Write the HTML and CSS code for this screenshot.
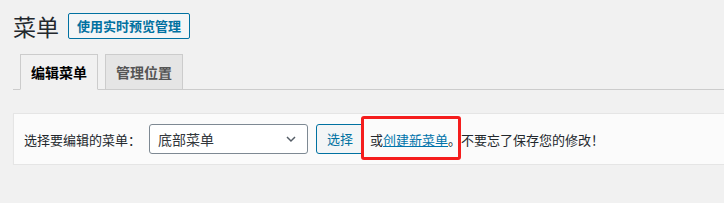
FILE: index.html
```html
<!DOCTYPE html>
<html lang="zh-CN">
<head>
<meta charset="utf-8">
<title>菜单</title>
<link rel="stylesheet" href="styles.css">
</head>
<body>
<div class="wrap">
  <div class="heading">
    <h1 class="title">菜单</h1>
    <a class="title-action" href="#">使用实时预览管理</a>
  </div>
  <nav class="tabs">
    <a class="tab tab-active" href="#">编辑菜单</a>
    <a class="tab" href="#">管理位置</a>
  </nav>
  <div class="manage">
    <span class="label">选择要编辑的菜单：</span>
    <div class="select">
      <span>底部菜单</span>
      <svg class="chev" width="16" height="16" viewBox="0 0 20 20"><path d="M5 7.5l5 5 5-5" fill="none" stroke="#555d66" stroke-width="1.8"/></svg>
    </div>
    <button class="btn">选择</button>
    <span class="note"><span class="hl">或<a href="#">创建新菜单</a>。</span>不要忘了保存您的修改！</span>
  </div>
</div>
</body>
</html>
```
FILE: styles.css
```css
html, body {
  margin: 0;
  padding: 0;
  background: #f1f1f1;
  overflow: hidden;
}
body {
  font-family: "Noto Sans CJK SC", "Noto Sans", sans-serif;
  color: #23282d;
  font-size: 13px;
}
.wrap {
  padding: 0 0 0 13px;
}
.heading {
  display: flex;
  align-items: center;
  padding-top: 13px;
  height: 26px;
}
.title {
  margin: 0;
  font-size: 23px;
  font-weight: 400;
  line-height: 26px;
  color: #23282d;
}
.title-action {
  margin-left: 9px;
  box-sizing: border-box;
  height: 26px;
  padding: 0 8px;
  border: 1px solid #0071a1;
  border-radius: 2px;
  color: #0071a1;
  background: #f3f5f6;
  font-size: 13px;
  font-weight: 700;
  line-height: 24px;
  text-decoration: none;
}
.tabs {
  display: flex;
  margin-top: 15px;
  border-bottom: 1px solid #ccc;
  margin-right: -20px;
}
.tab {
  display: block;
  margin-left: 7px;
  margin-bottom: -1px;
  padding: 5px 10px;
  border: 1px solid #ccc;
  background: #e5e5e5;
  color: #555;
  font-size: 14px;
  font-weight: 700;
  line-height: 24px;
  text-decoration: none;
}
.tab-active {
  background: #f1f1f1;
  border-bottom-color: #f1f1f1;
  color: #000;
}
.manage {
  display: flex;
  align-items: center;
  margin-top: 23px;
  margin-right: -20px;
  padding: 10px;
  background: #fbfbfb;
  border: 1px solid #e5e5e5;
  box-shadow: 0 1px 1px rgba(0,0,0,.04);
  height: 30px;
}
.label {
  line-height: 19px;
}
.select {
  box-sizing: border-box;
  display: flex;
  align-items: center;
  justify-content: space-between;
  margin-left: 8px;
  width: 159px;
  height: 30px;
  padding: 0 8px 0 8px;
  border: 1px solid #7e8993;
  border-radius: 3px;
  background: #fff;
  font-size: 14px;
  color: #32373c;
}
.chev {
  display: block;
}
.btn {
  box-sizing: border-box;
  margin-left: 8px;
  height: 30px;
  padding: 0 10px;
  border: 1px solid #0071a1;
  border-radius: 3px;
  background: #f3f5f6;
  color: #0071a1;
  font-family: inherit;
  font-size: 13px;
  line-height: 28px;
}
.note {
  margin-left: 6px;
  line-height: 19px;
}
.hl {
  position: relative;
}
.hl::after {
  content: "";
  position: absolute;
  left: -9px;
  right: 0;
  top: -14px;
  bottom: -11px;
  border: 3px solid #f51d1d;
  border-radius: 3px;
}
.note a {
  color: #0073aa;
  text-decoration: underline;
}
```
